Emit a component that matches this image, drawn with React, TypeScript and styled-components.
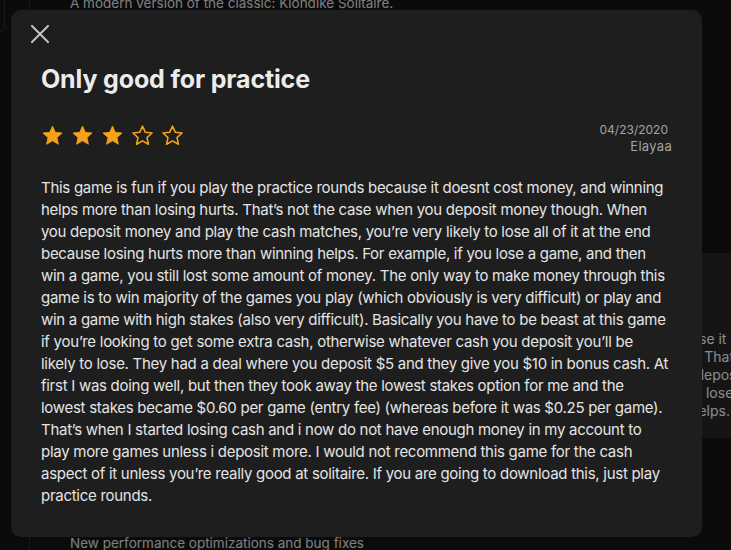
import React from "react";
import styled, { createGlobalStyle } from "styled-components";

const GlobalStyle = createGlobalStyle`
  html, body {
    margin: 0;
    padding: 0;
    background: #131313;
    overflow: hidden;
  }
  body {
    font-family: Inter, "Noto Sans", "Liberation Sans", sans-serif;
    -webkit-font-smoothing: antialiased;
  }
  * { box-sizing: border-box; }
`;

const Page = styled.div`
  position: relative;
  width: 731px;
  height: 550px;
  overflow: hidden;
  background: #131313;
  display: flex;
`;

const SideStub = styled.div`
  flex: none;
  width: 5px;
  height: 42px;
  margin-top: -10px;
  border-right: 1px solid #2e2e2e;
  border-bottom: 1px solid #2e2e2e;
  border-bottom-right-radius: 8px;
`;

const Column = styled.div`
  flex: 1;
  margin-left: 24px;
  border-left: 1px solid #2b2b2b;
  padding-left: 40px;
  display: flex;
  flex-direction: column;
  min-width: 0;
`;

const MutedLine = styled.div<{ $top: number }>`
  margin-top: ${(p) => p.$top}px;
  font-size: 13.5px;
  line-height: 18px;
  color: #e8e8e8;
  white-space: nowrap;
  opacity: 0.9;
`;

const CardRow = styled.div`
  margin-top: 241px;
  display: flex;
  padding-left: 250px;
`;

const BgCard = styled.div`
  flex: none;
  width: 520px;
  height: 185px;
  background: #232323;
  border-radius: 10px;
  padding: 18px 20px;
  display: flex;
  flex-direction: column;
  overflow: hidden;
`;

const BgCardTitle = styled.div`
  font-size: 16px;
  font-weight: 700;
  color: #eeeeee;
  line-height: 22px;
`;

const BgCardMeta = styled.div`
  margin-top: 8px;
  height: 20px;
`;

const BgCardText = styled.p`
  margin: 22px 0 0;
  font-size: 14px;
  line-height: 18px;
  color: #e6e6e6;
  width: 440px;
`;

const UpdatesLine = styled(MutedLine)``;

const Backdrop = styled.div`
  position: absolute;
  inset: 0;
  background: rgba(0, 0, 0, 0.4);
`;

const Modal = styled.div`
  position: absolute;
  left: 11px;
  top: 10px;
  width: 691px;
  background: #1e1e1e;
  border-radius: 10px;
  padding: 15px 30px 30px 30px;
  display: flex;
  flex-direction: column;
`;

const CloseButton = styled.button`
  align-self: flex-start;
  margin-left: -10px;
  width: 18px;
  height: 18px;
  padding: 0;
  border: 0;
  background: transparent;
  color: #c4c4c4;
  cursor: pointer;
  display: flex;
`;

const Title = styled.h1`
  margin: 21px 0 0;
  font-size: 25px;
  line-height: 30px;
  font-weight: 700;
  color: #ececec;
  letter-spacing: -0.15px;
`;

const MetaRow = styled.div`
  margin-top: 27px;
  display: flex;
  justify-content: space-between;
  align-items: flex-start;
`;

const Stars = styled.div`
  margin-top: 3px;
  display: flex;
  gap: 7px;
`;

const MetaRight = styled.div`
  display: flex;
  flex-direction: column;
  align-items: flex-end;
  line-height: 17px;
  color: #a3a3a3;
`;

const DateText = styled.span`
  font-size: 12px;
  padding-right: 4px;
`;

const Author = styled.span`
  font-size: 13px;
  letter-spacing: 0.3px;
`;

const Body = styled.p`
  margin: 22px 0 0;
  font-size: 15px;
  line-height: 22px;
  color: #e4e4e4;
  letter-spacing: -0.28px;
`;

const Line = styled.span`
  display: block;
  white-space: nowrap;
`;

const STAR =
  "M12 2.2l2.95 6.5 7.05.72-5.3 4.75 1.5 6.98L12 17.6l-6.2 3.55 1.5-6.98L2 9.42l7.05-.72z";

const Star: React.FC<{ filled: boolean }> = ({ filled }) => (
  <svg width="23" height="23" viewBox="0 0 24 24">
    <path
      d={STAR}
      fill={filled ? "#f8a21b" : "none"}
      stroke="#f8a21b"
      strokeWidth={filled ? 0.8 : 1.6}
      strokeLinejoin="round"
    />
  </svg>
);

const lines = [
  "This game is fun if you play the practice rounds because it doesnt cost money, and winning",
  "helps more than losing hurts. That’s not the case when you deposit money though. When",
  "you deposit money and play the cash matches, you’re very likely to lose all of it at the end",
  "because losing hurts more than winning helps. For example, if you lose a game, and then",
  "win a game, you still lost some amount of money. The only way to make money through this",
  "game is to win majority of the games you play (which obviously is very difficult) or play and",
  "win a game with high stakes (also very difficult). Basically you have to be beast at this game",
  "if you’re looking to get some extra cash, otherwise whatever cash you deposit you’ll be",
  "likely to lose. They had a deal where you deposit $5 and they give you $10 in bonus cash. At",
  "first I was doing well, but then they took away the lowest stakes option for me and the",
  "lowest stakes became $0.60 per game (entry fee) (whereas before it was $0.25 per game).",
  "That’s when I started losing cash and i now do not have enough money in my account to",
  "play more games unless i deposit more. I would not recommend this game for the cash",
  "aspect of it unless you’re really good at solitaire. If you are going to download this, just play",
  "practice rounds.",
];

export default function App() {
  return (
    <>
      <GlobalStyle />
      <Page>
        <SideStub />
        <Column>
          <MutedLine $top={-6}>A modern version of the classic: Klondike Solitaire.</MutedLine>
          <CardRow>
            <BgCard>
              <BgCardTitle>Only good for practice</BgCardTitle>
              <BgCardMeta />
              <BgCardText>
                This game is fun if you play the practice rounds because it doesnt cost money, and
                winning helps more than losing hurts. That’s not the case when you deposit money
                though. When you deposit money and play the cash matches, you’re very likely to lose
                all of it at the end because losing hurts more than winning helps.
              </BgCardText>
            </BgCard>
          </CardRow>
          <UpdatesLine $top={96}>New performance optimizations and bug fixes</UpdatesLine>
        </Column>
        <Backdrop />
        <Modal role="dialog" aria-label="Review">
          <CloseButton aria-label="Close">
            <svg width="18" height="18" viewBox="0 0 18 18">
              <path d="M1 1L17 17M17 1L1 17" stroke="currentColor" strokeWidth="2" strokeLinecap="round" />
            </svg>
          </CloseButton>
          <Title>Only good for practice</Title>
          <MetaRow>
            <Stars>
              {[0, 1, 2, 3, 4].map((i) => (
                <Star key={i} filled={i < 3} />
              ))}
            </Stars>
            <MetaRight>
              <DateText>04/23/2020</DateText>
              <Author>Elayaa</Author>
            </MetaRight>
          </MetaRow>
          <Body>
            {lines.map((l, i) => (
              <Line key={i}>{l}</Line>
            ))}
          </Body>
        </Modal>
      </Page>
    </>
  );
}
